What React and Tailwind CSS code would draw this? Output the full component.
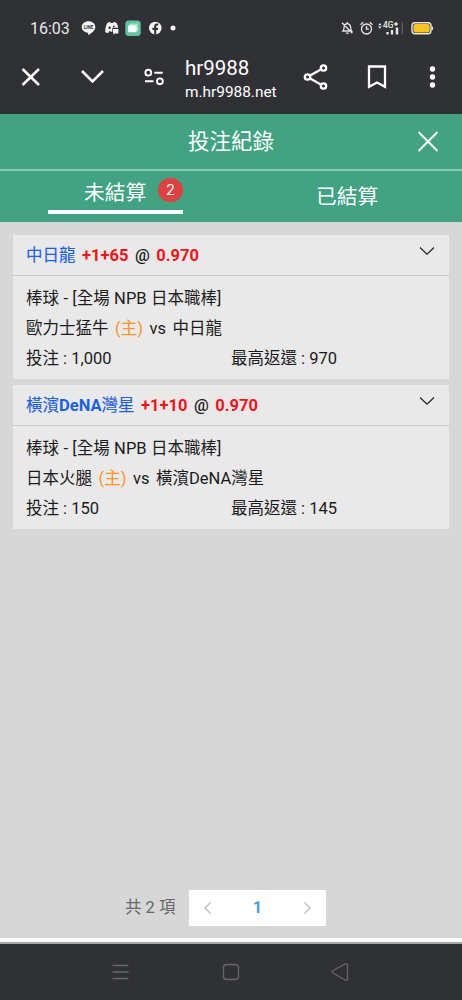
import React from "react";

function StatusBar() {
  return (
    <div className="flex h-14 items-center">
      <span className="ml-[30px] w-[51px] shrink-0 pt-px text-[16px] text-[#e8e8ea]">16:03</span>
      <svg className="shrink-0" width="98" height="18" viewBox="0 0 98 18" fill="#f4f4f4">
        <path d="M7.500 2.200C3.600 2.200.7 4.700.7 8c0 3 2.500 5.300 6 5.800.6.2.5.6.4 2.200 3-1.300 7.200-4.300 7.200-8 0-3.300-2.900-5.800-6.800-5.800Z" />
        <text x="7.500" y="9.800" fontSize="4.600" fontWeight="700" fontFamily="Roboto" textAnchor="middle" fill="#303135">LINE</text>
        <path d="M26.300 4c1-.6 1.900-.8 2.900-.9l.5 1h2.400l.5-1c1 .1 2 .4 2.900.9 1 1.500 1.500 3 1.600 4.800h-5.800v4h-1.500l-1.200-1-1.400 2.300c-1.300-.1-2-.4-3-1.200 0-3.500.6-6.200 2.100-8.900Z" />
        <circle cx="28.600" cy="8.700" r="1.200" fill="#303135" />
        <circle cx="32.800" cy="7.400" r="0.900" fill="#303135" />
        <path d="M32 10h5.400v4.500h-3.200l-1.300 1.200v-1.200H32Z" />
        <rect x="44.300" y="1.500" width="15.400" height="15.400" rx="3.500" fill="#62c4a0" />
        <path d="M49.500 4.500H57v7l-2 2h-7.500v-7Z" fill="#a9e3cb" />
        <rect x="47" y="6.500" width="8.500" height="6.500" rx="1.500" fill="#fff" />
        <circle cx="74.300" cy="9" r="6.300" />
        <path d="M73.200 15.500v-4.600h-1.800V8.800h1.800V7.600c0-2 1-3 2.800-3h1.300v1.900h-1c-.8 0-1.100.4-1.100 1.100v1.200h2l-.3 2.100h-1.700v4.600Z" fill="#303135" />
        <circle cx="92" cy="9" r="2.500" />
      </svg>
      <svg className="ml-[162px] shrink-0" width="94" height="18" viewBox="0 0 94 18" fill="none" stroke="#e8e8ea" strokeWidth="1.300">
        <path d="M2 12c1-1 .9-3 1.100-4.300.3-1.900 1.400-3.100 3.200-3.100s2.900 1.200 3.200 3.100c.2 1.300.1 3.300 1.100 4.300Zm2.900 2.200h2.800M6.300 4.600V3M1 3.800l10.400 10.400" />
        <circle cx="25.500" cy="10" r="5" />
        <path d="M25.500 7v3.200h2.400M19.500 5.700l2.700-2.500M31.500 5.700l-2.700-2.500" />
        <path d="M37.200 6.200 38.900 4l1.700 2.200Zm0 1.400 1.700 2.200 1.700-2.200Z" fill="#e8e8ea" stroke="none" />
        <text x="42" y="9.300" fontSize="8.300" fontFamily="Roboto" fill="#e8e8ea" stroke="#e8e8ea" strokeWidth=".2">4G</text>
        <path d="M53 5h4M55 3v4" />
        <path d="M46.500 13v2.500M51 11v4.500" strokeWidth="2.300" />
        <path d="M56 8.500v7" strokeWidth="2.500" />
        <path d="M61.300 3v12.500" stroke="#5d5e62" />
        <rect x="71" y="3.700" width="19" height="11" rx="3" strokeWidth="1.400" />
        <rect x="72.400" y="5" width="16.300" height="8.400" rx="2" fill="#f8c51b" stroke="none" />
        <path d="M91.300 7.500v3.500" />
      </svg>
    </div>
  );
}

function BrowserBar() {
  return (
    <div className="flex h-[58px] items-start text-white">
      <svg className="shrink-0" width="185" height="42" viewBox="0 0 185 42" fill="none" stroke="#fff" strokeWidth="2.500">
        <path d="m22.500 13 16.500 16M39 13 22.500 29M82 15l10.500 10.500L103 15" />
        <g strokeWidth="1.900">
          <circle cx="148.300" cy="16.700" r="2.900" />
          <path d="M154.300 16.700h8.500M145 25.300h8.500" />
          <circle cx="159.900" cy="25.300" r="2.900" />
        </g>
      </svg>
      <div className="w-[110px] shrink-0 whitespace-nowrap">
        <div className="h-[23px] pt-px text-[20.500px] leading-[23px]">hr9988</div>
        <div className="mt-[3px] text-[15.400px] leading-[20px]">m.hr9988.net</div>
      </div>
      <svg className="shrink-0" width="167" height="42" viewBox="0 0 167 42" fill="none" stroke="#fff" strokeWidth="2.300">
        <path d="m12.500 21 16-9M12.500 21l16 9" />
        <g fill="#303135">
          <circle cx="12.500" cy="21" r="2.700" />
          <circle cx="28.500" cy="12" r="2.700" />
          <circle cx="28.500" cy="30" r="2.700" />
        </g>
        <path d="M74 10.500h16v20.300l-8-4.300-8 4.300Z" />
        <g fill="#fff" stroke="none">
          <circle cx="137.500" cy="13" r="2.700" />
          <circle cx="137.500" cy="21" r="2.700" />
          <circle cx="137.500" cy="29" r="2.700" />
        </g>
      </svg>
    </div>
  );
}

function Header() {
  return (
    <header className="h-[108px] bg-[#41a381] text-white">
      <div className="grid h-[57px] grid-cols-[1fr_120px_1fr] items-center border-b-2 border-[#8bc8b2]">
        <h1 className="col-start-2 text-center text-[21.500px] leading-[30px]">投注紀錄</h1>
        <svg className="mr-[22px] justify-self-end" width="24" height="24" viewBox="0 0 24 24" fill="none" stroke="#fff" strokeWidth="2">
          <path d="m2.500 2 19 19M21.500 2l-19 19" />
        </svg>
      </div>
      <div className="flex h-[51px]">
        <div className="ml-12 h-[43px] w-[135px] border-b-4 border-white pl-9">
          <div className="flex h-[41px] items-center">
            <span className="w-[74px] pt-[5px] text-[20.700px]">未結算</span>
            <span className="mb-[3px] flex h-6 w-[25px] shrink-0 items-center justify-center rounded-full bg-[#e04040] text-[15px]">2</span>
          </div>
        </div>
        <span className="ml-[133px] pt-[10px] text-[20.700px] leading-[32px]">已結算</span>
      </div>
    </header>
  );
}

function TeamName({ name }) {
  const parts = name.match(/[A-Za-z]+|[^A-Za-z]+/g);
  return (
    <span className="text-[#1c60e8]">
      {parts.map((part) => (
        <span
          key={part}
          className={/[A-Za-z]/.test(part) ? "font-bold" : "font-normal [-webkit-text-stroke:0.15px_#1c60e8]"}
        >
          {part}
        </span>
      ))}
    </span>
  );
}

function BetCard({ team, line, home, away, stake, payout }) {
  return (
    <section className="h-36 bg-[#e9e9e9] text-[16.500px] text-[#1b1b1b]">
      <div className="flex h-[41px] items-center border-b border-[#c9c9c9] pr-[14px] pl-[13px] font-bold">
        <div className="flex flex-1 items-center gap-[6.500px] pt-[2px]">
          <TeamName name={team} />
          <span className="text-[#fa1016]">{line}</span>
          <span className="font-medium">@</span>
          <span className="text-[#fa1016]">0.970</span>
        </div>
        <svg className="mb-[9px]" width="16" height="10" viewBox="0 0 16 10" fill="none" stroke="#222" strokeWidth="1.200">
          <path d="m1 1.500 7 6.700 7-6.700" />
        </svg>
      </div>
      <div className="px-[13px] pt-[8px] leading-[30px] whitespace-nowrap">
        <div className="[word-spacing:0.3px]">棒球 - [全場 NPB 日本職棒]</div>
        <div className="flex gap-[6.500px]">
          <span>{home}</span>
          <span className="text-[#fb941f]">(主)</span>
          <span>vs</span>
          <span>{away}</span>
        </div>
        <div className="grid grid-cols-2">
          <span>投注 : {stake}</span>
          <span>最高返還 : {payout}</span>
        </div>
      </div>
    </section>
  );
}

function Pagination() {
  return (
    <div className="mt-auto mb-3 ml-[125px] flex h-9 items-center">
      <span className="w-16 pt-px text-[16.500px] whitespace-nowrap text-[#66676a]">共 2 項</span>
      <div className="flex h-9 w-[137px] items-center justify-between bg-white px-[14px]">
        <svg width="9" height="14" viewBox="0 0 9 14" fill="none" stroke="#bcbec4" strokeWidth="1.400">
          <path d="M7.500 1.500 2 7l5.500 5.500" />
        </svg>
        <span className="pt-px text-[16.500px] font-bold text-[#4b9ee8]">1</span>
        <svg width="9" height="14" viewBox="0 0 9 14" fill="none" stroke="#bcbec4" strokeWidth="1.400">
          <path d="M1.500 1.500 7 7l-5.500 5.500" />
        </svg>
      </div>
    </div>
  );
}

export default function App() {
  return (
    <div className="flex h-[1000px] w-[462px] flex-col overflow-hidden bg-[#303135] font-['Roboto','Noto_Sans_CJK_TC',sans-serif]">
      <StatusBar />
      <BrowserBar />
      <Header />
      <main className="flex h-[716px] flex-col bg-[#d7d7d7] pt-[13px]">
        <div className="mr-[13px] ml-[13px] flex flex-col gap-[6px]">
          <BetCard team="中日龍" line="+1+65" home="歐力士猛牛" away="中日龍" stake="1,000" payout="970" />
          <BetCard team="橫濱DeNA灣星" line="+1+10" home="日本火腿" away="橫濱DeNA灣星" stake="150" payout="145" />
        </div>
        <Pagination />
      </main>
      <div className="h-[6px] border-t-4 border-b-2 border-t-[#fafafa] border-b-[#a5a6a7]" />
      <nav className="flex flex-1 items-center">
        <svg width="462" height="56" viewBox="0 0 462 56" fill="none" stroke="#66676b" strokeWidth="1.300">
          <path d="M112.500 21.500h16M112.500 28h16M112.500 34.500h16" />
          <rect x="223.500" y="20.500" width="15" height="15" rx="3" />
          <path d="m333 26.500 12-6.500c1.200-.6 2.500 0 2.500 1v14c0 1-1.300 1.600-2.500 1l-12-7c-1.200-.7-1.200-1.800 0-2.500Z" />
        </svg>
      </nav>
    </div>
  );
}
